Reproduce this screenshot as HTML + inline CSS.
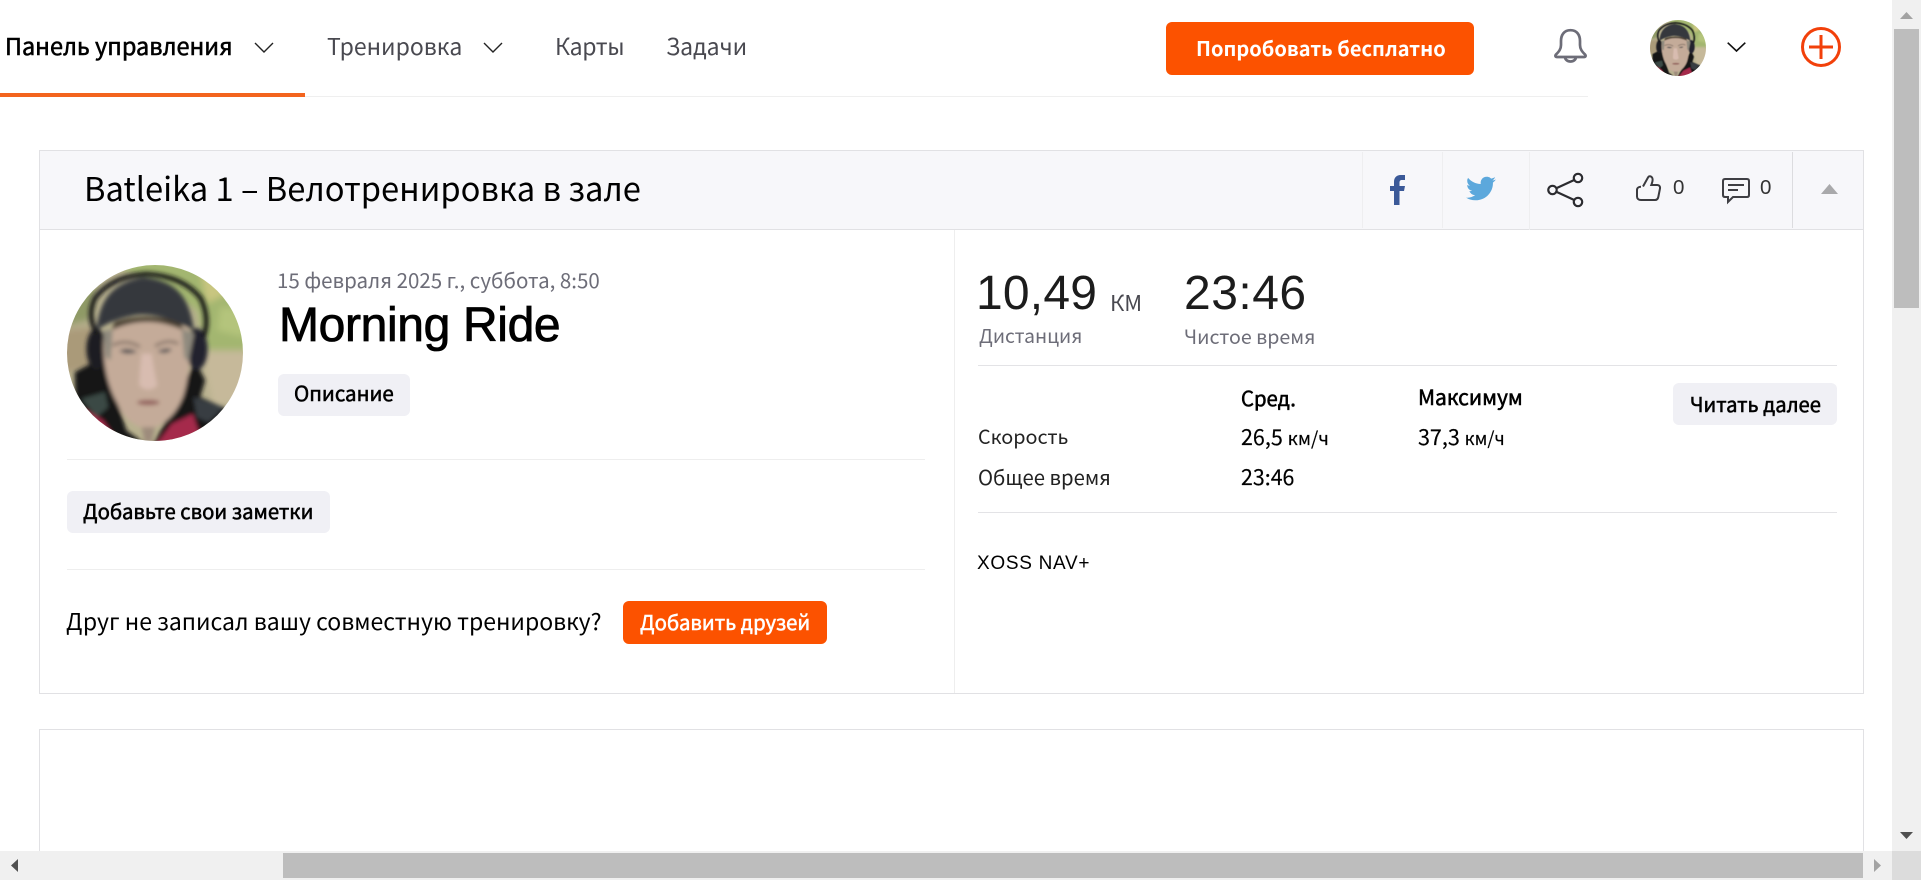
<!DOCTYPE html>
<html lang="ru"><head><meta charset="utf-8"><title>Morning Ride</title>
<style>
html,body{margin:0;padding:0;background:#fff;width:1921px;height:880px;overflow:hidden}
body{position:relative;font-family:"Liberation Sans",sans-serif;color:#000}
.a{position:absolute}
.t{position:absolute;white-space:nowrap;line-height:1}
.n{font-family:"Noto Sans CJK SC","Liberation Sans",sans-serif}
.m{-webkit-text-stroke:.55px currentColor}
.g{color:#6d6d78}
.d{color:#494950}
.btn{position:absolute;border-radius:6px;background:#f0f0f5}
.or{background:#fc5200}
.hr{position:absolute;height:1px;background:#eeeeee}
svg{position:absolute;overflow:visible}
</style></head><body>

<svg width="0" height="0" style="position:absolute"><defs>
<filter id="bl" x="-20%" y="-20%" width="140%" height="140%"><feGaussianBlur stdDeviation="10"/></filter>
<filter id="bs" x="-20%" y="-20%" width="140%" height="140%"><feGaussianBlur stdDeviation="6"/></filter>
<clipPath id="cc"><circle cx="345" cy="308" r="263"/></clipPath>
<symbol id="face" viewBox="82 45 526 526">
<g clip-path="url(#cc)"><g filter="url(#bl)">
<rect x="40" y="10" width="610" height="600" fill="#b8b18f"/>
<path d="M200 30H520L640 200V300L500 320 470 180Z" fill="#a3b66f"/>
<path d="M480 60L560 130 500 160Z" fill="#c9c680"/>
<path d="M60 130L180 60 150 210 60 230Z" fill="#8f9a66"/>
<path d="M480 300L640 300V440L520 470Z" fill="#c6b99a"/>
<path d="M60 240L160 230 170 350 60 370Z" fill="#aa9a79"/>
<path d="M540 170L620 180 610 260 530 240Z" fill="#b4c47c"/>
</g>
<g filter="url(#bs)">
<path d="M105 365L190 320 260 540 330 590H110Z" fill="#151316"/>
<path d="M465 330L495 390 480 440 570 480 460 600H330L420 430Z" fill="#161418"/>
<path d="M125 445L195 425 205 470 170 500Z" fill="#3b4a44"/>
<path d="M460 440L550 470 505 515 470 500Z" fill="#373c42"/>
<path d="M135 475L190 510 250 600H140Z" fill="#a52a4c"/>
<path d="M395 520L458 490 495 600H335Z" fill="#a52a4c"/>
<ellipse cx="170" cy="296" rx="30" ry="62" fill="#1c1d22"/>
<ellipse cx="470" cy="296" rx="32" ry="62" fill="#20242f"/>
<path d="M172 250Q140 200 165 145 215 78 320 72 430 78 482 145 510 205 490 260" fill="none" stroke="#121215" stroke-width="14"/>
<path d="M192 255C186 340 205 410 232 458 255 510 290 532 325 534 370 530 410 490 430 435 448 375 452 310 445 235 360 195 270 195 192 255Z" fill="#c4ab99"/>
<path d="M190 240L218 240 212 330 198 320Z" fill="#8f8a7e"/>
<path d="M425 235L462 250 445 335 432 320Z" fill="#8f8a7e"/>
<path d="M238 302Q262 288 292 305 262 316 238 302Z" fill="#555255"/>
<path d="M352 303Q378 290 396 297 378 315 352 303Z" fill="#555255"/>
<path d="M218 285Q260 265 300 290" stroke="#8d7a6e" stroke-width="9" fill="none"/>
<path d="M345 288Q380 265 415 280" stroke="#8d7a6e" stroke-width="9" fill="none"/>
<path d="M305 310Q298 370 298 405 325 430 352 405 342 360 335 310Z" fill="#d8bcb0"/>
<ellipse cx="325" cy="456" rx="34" ry="8" fill="#94635e"/>
<path d="M305 530H345L335 575H315Z" fill="#9d8b7c"/>
<path d="M225 215Q320 185 420 215L430 240Q320 190 215 240Z" fill="#4a3f33"/>
<path d="M170 240C180 160 205 100 310 82 410 92 448 140 462 242 400 205 330 186 280 196 240 204 200 218 170 240Z" fill="#36373c"/>
</g></g>
</symbol>
</defs></svg>

<!-- Nav -->
<div class="hr" style="left:0;top:96px;width:1588px;height:1px;background:#efefef"></div>
<div class="a" style="left:0;top:93px;width:305px;height:4px;background:#f3641e"></div>
<div class="t n m" style="left:5px;top:34px;font-size:23.500px">Панель управления</div>
<svg style="left:254px;top:42px" width="20" height="11" viewBox="0 0 20 11"><path d="M1 1L10 10 19 1" fill="none" stroke="#222" stroke-width="1.4"/></svg>
<div class="t n d" style="left:327px;top:34px;font-size:23px">Тренировка</div>
<svg style="left:483px;top:42px" width="20" height="11" viewBox="0 0 20 11"><path d="M1 1L10 10 19 1" fill="none" stroke="#222" stroke-width="1.4"/></svg>
<div class="t n d" style="left:555px;top:34px;font-size:23px;letter-spacing:-.3px">Карты</div>
<div class="t n d" style="left:666px;top:34px;font-size:23px;letter-spacing:-.1px">Задачи</div>

<div class="btn or" style="left:1166px;top:22px;width:308px;height:53px"></div>
<div class="t n" style="left:1196px;top:38px;font-size:20px;font-weight:700;color:#fff">Попробовать бесплатно</div>

<svg style="left:1554px;top:29px" width="33" height="33" viewBox="0 0 33 33"><path d="M16.5 1.2C10 1.2 7 6 7 12V16C7 20 5 22.500 2 25.500 .8 27 1.500 28 3 28H30C31.500 28 32.200 27 31 25.500 28 22.500 26 20 26 16V12C26 6 23 1.200 16.500 1.200Z M11 28A5.500 4.500 0 0 0 22 28" fill="none" stroke="#6d6d78" stroke-width="2.700"/></svg>
<svg style="left:1650px;top:20px" width="56" height="56"><use href="#face" width="56" height="56"/></svg>
<svg style="left:1727px;top:42px" width="19" height="10" viewBox="0 0 19 10"><path d="M.7 .7L9.500 9 18.300 .7" fill="none" stroke="#111" stroke-width="1.600"/></svg>
<svg style="left:1801px;top:27px" width="40" height="40" viewBox="0 0 40 40"><circle cx="20" cy="20" r="18.500" fill="none" stroke="#f2400a" stroke-width="3"/><path d="M8 20H32M20 8V32" stroke="#f2400a" stroke-width="3"/></svg>

<!-- Card 1 -->
<div class="a" style="left:39px;top:150px;width:1825px;height:544px;box-sizing:border-box;border:1px solid #e1e1e4;background:#fff"></div>
<div class="a" style="left:40px;top:151px;width:1823px;height:78px;background:#f7f7fa;border-bottom:1px solid #e1e1e4"></div>
<div class="a" style="left:954px;top:230px;width:1px;height:463px;background:#eeeeee"></div>
<div class="a" style="left:1362px;top:152px;width:1px;height:76px;background:#eeeef0"></div>
<div class="a" style="left:1442px;top:152px;width:1px;height:76px;background:#eeeef0"></div>
<div class="a" style="left:1529px;top:152px;width:1px;height:78px;background:#eeeef0"></div>
<div class="a" style="left:1792px;top:152px;width:1px;height:76px;background:#dcdcdf"></div>

<div class="t n" style="left:84px;top:172px;font-size:32.700px">Batleika 1 – Велотренировка в зале</div>

<svg style="left:1390px;top:175px" width="15" height="30" viewBox="0 0 15 30"><path d="M4 30V16H0V11H4V7C4 2 7 0 11 0H15V5H12C10 5 9.500 6 9.500 8V11H15L14 16H9.500V30Z" fill="#3b5998"/></svg>
<svg style="left:1466px;top:174px" width="30" height="29" viewBox="0 0 24 24" preserveAspectRatio="none"><path d="M23.950 4.570a10 10 0 01-2.820.770 4.960 4.960 0 002.160-2.720c-.950.550-2 .950-3.120 1.180a4.920 4.920 0 00-8.380 4.480C7.690 8.100 4.070 6.130 1.640 3.160a4.820 4.820 0 00-.670 2.480c0 1.700.870 3.200 2.190 4.090a4.900 4.900 0 01-2.230-.620v.060a4.920 4.920 0 003.950 4.830 5 5 0 01-2.210.080 4.940 4.940 0 004.600 3.420A9.870 9.870 0 010 19.540a13.940 13.940 0 007.550 2.210c9.060 0 14-7.500 14-14v-.640a9.900 9.900 0 002.400-2.540z" fill="#5ca8dc"/></svg>
<svg style="left:1547px;top:173px" width="36" height="34" viewBox="0 0 36 34"><g fill="none" stroke="#2b2b2f" stroke-width="2.200"><circle cx="31" cy="5" r="4.200"/><circle cx="5.500" cy="17" r="4.200"/><circle cx="31" cy="29" r="4.200"/><path d="M9.300 15.200L27.200 7M9.300 18.800L27.200 27"/></g></svg>
<svg style="left:1636px;top:175px" width="25" height="26" viewBox="0 0 25 26"><path d="M7 11.500L12 2.500C13 .8 15 1 16 2.500 17.200 4 16.500 7 15.300 10H21C23.300 10 24.300 11.500 24 13.500L22.300 22C21.800 24.300 20.500 25 19 25H5C2.500 25 1 23.500 1 21.500V15C1 12.800 3 11.800 5 11.800" fill="none" stroke="#3a3a3e" stroke-width="2"/></svg>
<div class="t" style="left:1673px;top:178px;font-size:20.500px;color:#333">0</div>
<svg style="left:1722px;top:178px" width="28" height="25" viewBox="0 0 28 25"><path d="M3 1H25Q27 1 27 3V17Q27 19 25 19H11L6 24V19H3Q1 19 1 17V3Q1 1 3 1Z" fill="none" stroke="#3f3f44" stroke-width="2"/><path d="M6 7H22M6 12H16" stroke="#3f3f44" stroke-width="2"/></svg>
<div class="t" style="left:1760px;top:178px;font-size:20.500px;color:#333">0</div>
<svg style="left:1821px;top:184px" width="17" height="10" viewBox="0 0 17 10"><path d="M8.500 0L17 10H0Z" fill="#a9a9ab"/></svg>

<!-- Left column -->
<svg style="left:67px;top:265px" width="176" height="176"><use href="#face" width="176" height="176"/></svg>
<div class="t n g" style="left:277px;top:269px;font-size:20.500px">15 февраля 2025 г., суббота, 8:50</div>
<div class="t" style="left:279px;top:302px;font-size:48px;letter-spacing:-.35px;-webkit-text-stroke:.8px #000">Morning Ride</div>
<div class="btn" style="left:278px;top:374px;width:132px;height:42px"></div>
<div class="t n m" style="left:294px;top:382px;font-size:20.500px">Описание</div>
<div class="hr" style="left:67px;top:459px;width:858px"></div>
<div class="btn" style="left:67px;top:491px;width:263px;height:42px"></div>
<div class="t n m" style="left:83px;top:500px;font-size:20.300px">Добавьте свои заметки</div>
<div class="hr" style="left:67px;top:569px;width:858px"></div>
<div class="t n" style="left:66px;top:609px;font-size:23px">Друг не записал вашу совместную тренировку?</div>
<div class="btn or" style="left:623px;top:601px;width:204px;height:43px"></div>
<div class="t n m" style="left:640px;top:611px;font-size:20.300px;color:#fff">Добавить друзей</div>

<!-- Right column -->
<div class="t" style="left:976px;top:270px;font-size:48px;letter-spacing:.2px;color:#1c1c1c">10,49</div>
<div class="t n d" style="left:1110px;top:291px;font-size:22px">КМ</div>
<div class="t" style="left:1184px;top:270px;font-size:48px;letter-spacing:.5px;color:#1c1c1c">23:46</div>
<div class="t n g" style="left:979px;top:326px;font-size:19.300px">Дистанция</div>
<div class="t n g" style="left:1184px;top:326px;font-size:19.600px">Чистое время</div>
<div class="hr" style="left:978px;top:365px;width:859px;background:#e3e3e6;height:1px"></div>
<div class="t n m" style="left:1241px;top:387px;font-size:20.300px">Сред.</div>
<div class="t n m" style="left:1418px;top:387px;font-size:21px">Максимум</div>
<div class="btn" style="left:1673px;top:383px;width:164px;height:42px"></div>
<div class="t n m" style="left:1690px;top:394px;font-size:20.200px">Читать далее</div>
<div class="t n" style="left:978px;top:426px;font-size:19.800px;color:#222">Скорость</div>
<div class="t n m" style="left:1241px;top:426px;font-size:21.500px;-webkit-text-stroke-width:.15px">26,5 <span style="font-size:18.500px">км/ч</span></div>
<div class="t n m" style="left:1418px;top:426px;font-size:21.500px;-webkit-text-stroke-width:.15px">37,3 <span style="font-size:18px">км/ч</span></div>
<div class="t n" style="left:978px;top:466px;font-size:20.300px;color:#222">Общее время</div>
<div class="t n m" style="left:1241px;top:466px;font-size:21.400px;-webkit-text-stroke-width:.15px">23:46</div>
<div class="hr" style="left:978px;top:512px;width:859px;background:#e3e3e6"></div>
<div class="t" style="left:977px;top:554px;font-size:19px;letter-spacing:.7px">XOSS NAV+</div>

<!-- Card 2 -->
<div class="a" style="left:39px;top:729px;width:1825px;height:130px;box-sizing:border-box;border:1px solid #e1e1e4;background:#fff"></div>

<!-- Scrollbars -->
<div class="a" style="left:1892px;top:0;width:29px;height:880px;background:#f0f0f0"></div>
<div class="a" style="left:1894px;top:29px;width:25px;height:279px;background:#bdbdbd"></div>
<svg style="left:1900px;top:12px" width="13" height="7"><path d="M6.500 0L13 7H0Z" fill="#a3a3a3"/></svg>
<svg style="left:1900px;top:832px" width="13" height="7"><path d="M0 0H13L6.500 7Z" fill="#505050"/></svg>
<div class="a" style="left:0;top:851px;width:1921px;height:29px;background:#f0f0f0"></div>
<div class="a" style="left:283px;top:853px;width:1580px;height:25px;background:#bdbdbd"></div>
<svg style="left:11px;top:859px" width="7" height="13"><path d="M7 0V13L0 6.500Z" fill="#505050"/></svg>
<svg style="left:1874px;top:859px" width="7" height="13"><path d="M0 0L7 6.500 0 13Z" fill="#a3a3a3"/></svg>
<div class="a" style="left:1892px;top:851px;width:29px;height:29px;background:#dcdcdc"></div>
</body></html>
